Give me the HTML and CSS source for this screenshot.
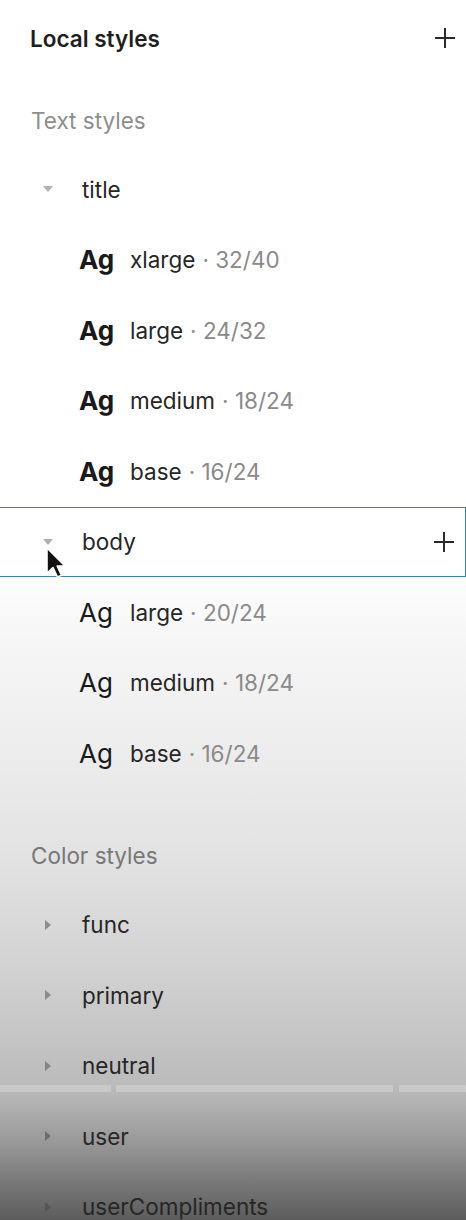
FILE: index.html
```html
<!DOCTYPE html>
<html>
<head>
<meta charset="utf-8">
<link rel="stylesheet" href="styles.css">
</head>
<body>
<div class="panel">
  <div class="header">
    <span class="header-title">Local styles</span>
    <svg class="plus" width="20" height="20" viewBox="0 0 20 20"><path d="M10 0V20M0 10H20" stroke="#2b2b2b" stroke-width="2"/></svg>
  </div>

  <div class="section-label first">Text styles</div>

  <div class="row group">
    <span class="caret"><svg width="10" height="6" viewBox="0 0 10 6"><path d="M0 0H10L5 6Z" fill="#b0b0b0"/></svg></span>
    <span class="name">title</span>
  </div>
  <div class="row style"><span class="ag bold">Ag</span><span class="name">xlarge</span><span class="meta">· 32/40</span></div>
  <div class="row style"><span class="ag bold">Ag</span><span class="name">large</span><span class="meta">· 24/32</span></div>
  <div class="row style"><span class="ag bold">Ag</span><span class="name">medium</span><span class="meta">· 18/24</span></div>
  <div class="row style"><span class="ag bold">Ag</span><span class="name">base</span><span class="meta">· 16/24</span></div>

  <div class="row group selected">
    <span class="caret"><svg width="10" height="6" viewBox="0 0 10 6"><path d="M0 0H10L5 6Z" fill="#b0b0b0"/></svg></span>
    <span class="name">body</span>
    <svg class="plus" width="20" height="20" viewBox="0 0 20 20"><path d="M10 0V20M0 10H20" stroke="#2b2b2b" stroke-width="2"/></svg>
    <svg class="cursor" width="22" height="34" viewBox="0 0 22 34"><path d="M2 2V27L8 21.5L12.5 31L16.5 29.3L12.2 20H20Z" fill="#111" stroke="#fff" stroke-width="1.6" stroke-linejoin="round"/></svg>
  </div>
  <div class="row style"><span class="ag">Ag</span><span class="name">large</span><span class="meta">· 20/24</span></div>
  <div class="row style"><span class="ag">Ag</span><span class="name">medium</span><span class="meta">· 18/24</span></div>
  <div class="row style"><span class="ag">Ag</span><span class="name">base</span><span class="meta">· 16/24</span></div>

  <div class="section-label second">Color styles</div>

  <div class="row group collapsed"><span class="caret"><svg width="6" height="10" viewBox="0 0 6 10"><path d="M0 0V10L6 5Z" fill="#8d8d8d"/></svg></span><span class="name">func</span></div>
  <div class="row group collapsed"><span class="caret"><svg width="6" height="10" viewBox="0 0 6 10"><path d="M0 0V10L6 5Z" fill="#8a8a8a"/></svg></span><span class="name">primary</span></div>
  <div class="row group collapsed"><span class="caret"><svg width="6" height="10" viewBox="0 0 6 10"><path d="M0 0V10L6 5Z" fill="#858585"/></svg></span><span class="name">neutral</span></div>
  <div class="row group collapsed"><span class="caret"><svg width="6" height="10" viewBox="0 0 6 10"><path d="M0 0V10L6 5Z" fill="#6e6e6e"/></svg></span><span class="name">user</span></div>
  <div class="row group collapsed"><span class="caret"><svg width="6" height="10" viewBox="0 0 6 10"><path d="M0 0V10L6 5Z" fill="#555"/></svg></span><span class="name">userCompliments</span></div>
</div>

<div class="scrub">
  <span class="seg s1"></span>
  <span class="seg s2"></span>
  <span class="seg s3"></span>
</div>
</body>
</html>
```

FILE: styles.css
```css
html, body {
  margin: 0;
  padding: 0;
}
body {
  width: 466px;
  height: 1220px;
  overflow: hidden;
  position: relative;
  font-family: Inter, "Noto Sans", sans-serif;
  color: #262626;
  background: linear-gradient(to bottom,
    #ffffff 0px,
    #ffffff 560px,
    #f6f6f6 640px,
    #ececec 760px,
    #e2e2e2 860px,
    #d3d3d3 960px,
    #c4c4c4 1040px,
    #bbbbbb 1084px,
    #b4b4b4 1100px,
    #9a9a9a 1140px,
    #7a7a7a 1180px,
    #5c5c5c 1220px);
}
.panel {
  display: flex;
  flex-direction: column;
}
.header {
  height: 76px;
  display: flex;
  align-items: center;
  justify-content: space-between;
  padding: 0 11px 0 30px;
}
.header-title {
  font-size: 22.5px;
  font-weight: 600;
  color: #1f1f1f;
}
.plus {
  display: block;
  flex: none;
}
.section-label {
  font-size: 22.5px;
  color: #8e8e8e;
  padding-left: 31px;
  line-height: 24px;
}
.section-label.first {
  padding-top: 33px;
  padding-bottom: 21px;
}
.section-label.second {
  margin-top: 55px;
  padding-bottom: 22px;
  color: #777;
}
.row {
  height: 70.5px;
  box-sizing: border-box;
  display: flex;
  align-items: center;
  font-size: 22.5px;
  position: relative;
}
.row.group {
  padding-left: 43px;
}
.caret {
  width: 39px;
  display: flex;
  align-items: center;
}
.collapsed .caret {
  padding-left: 2px;
  width: 37px;
}
.row.style {
  padding-left: 79px;
}
.ag {
  font-size: 26px;
  width: 51px;
  color: #1a1a1a;
  font-weight: 400;
}
.ag.bold {
  font-weight: 700;
}
.meta {
  color: #8a8a8a;
  margin-left: 7px;
}
.selected {
  border-top: 1.5px solid #3b7fc2;
  border-bottom: 1.5px solid #3b7fc2;
  border-right: 1.5px solid #3b7fc2;
}
.selected .plus {
  margin-left: auto;
  margin-right: 11px;
}
.cursor {
  position: absolute;
  left: 45px;
  top: 38px;
}
.scrub {
  position: absolute;
  left: 0;
  right: 0;
  top: 1084.5px;
  height: 7.5px;
  display: flex;
  gap: 5px;
}
.seg {
  background: #c9c9c9;
  height: 100%;
}
.s1 { width: 111px; }
.s2 { width: 277px; }
.s3 { flex: 1; margin-left: 1px; }
```
